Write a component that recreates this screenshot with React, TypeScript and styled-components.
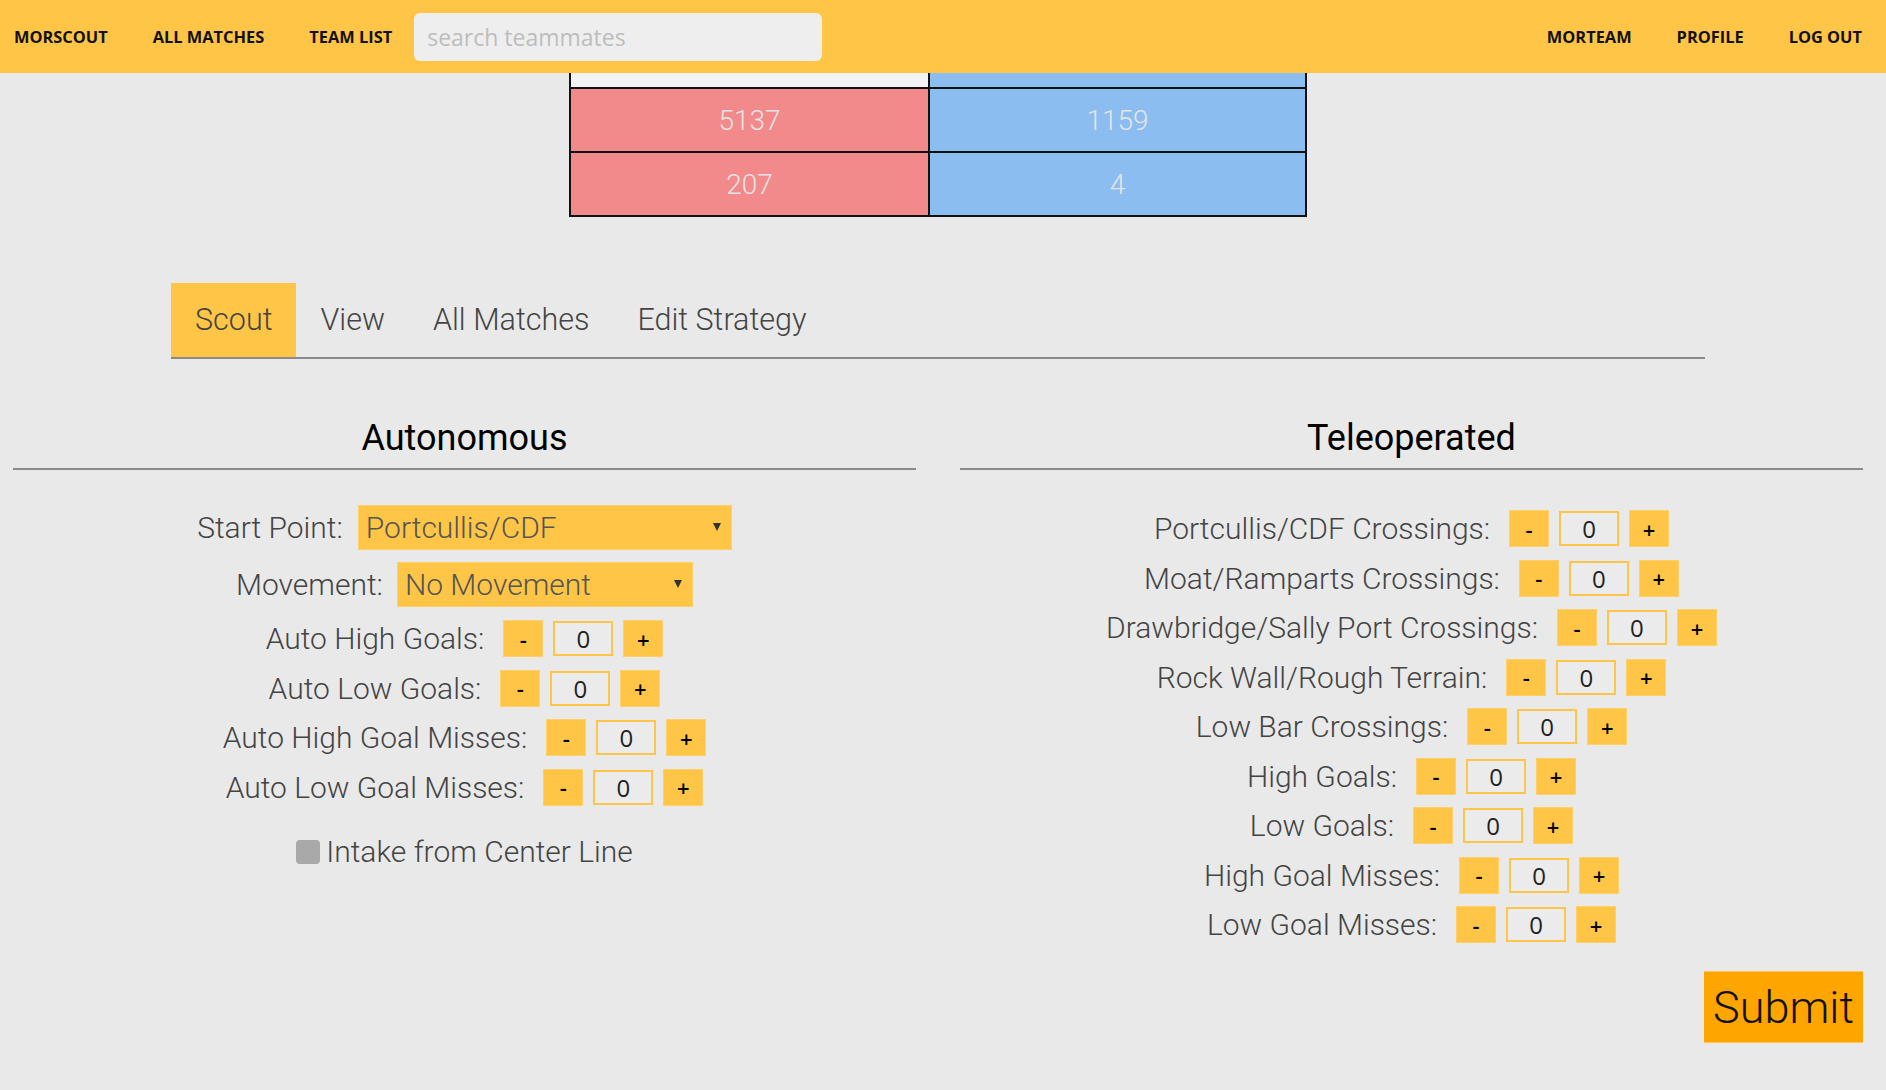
import React from 'react';
import styled, { createGlobalStyle } from 'styled-components';

const YELLOW = '#ffc547';

const GlobalStyle = createGlobalStyle`
  html, body {
    margin: 0;
    padding: 0;
    background: #e9e9e9;
  }
  body {
    font-family: Roboto, "Open Sans", sans-serif;
    font-weight: 300;
    color: #333;
  }
  * {
    box-sizing: border-box;
  }
`;

const leftNav = ['MorScout', 'All Matches', 'Team List'];
const rightNav = ['MorTeam', 'Profile', 'Log Out'];

const scores = [
  ['5137', '1159'],
  ['207', '4'],
];

const tabs = ['Scout', 'View', 'All Matches', 'Edit Strategy'];

const autoCounters = [
  'Auto High Goals:',
  'Auto Low Goals:',
  'Auto High Goal Misses:',
  'Auto Low Goal Misses:',
];

const teleCounters = [
  'Portcullis/CDF Crossings:',
  'Moat/Ramparts Crossings:',
  'Drawbridge/Sally Port Crossings:',
  'Rock Wall/Rough Terrain:',
  'Low Bar Crossings:',
  'High Goals:',
  'Low Goals:',
  'High Goal Misses:',
  'Low Goal Misses:',
];

const Counter = ({ label }: { label: string }) => (
  <StepRow>
    <FieldLabel>{label}</FieldLabel>
    <StepButton>-</StepButton>
    <CountInput defaultValue="0" />
    <StepButton>+</StepButton>
  </StepRow>
);

const App = () => {
  return (
    <>
      <GlobalStyle />
      <TopBar>
        <NavSide>
          <NavLinks>
            {leftNav.map((item) => (
              <NavLink key={item} href="#">
                {item}
              </NavLink>
            ))}
          </NavLinks>
          <SearchBox placeholder="search teammates" />
        </NavSide>
        <NavLinks>
          {rightNav.map((item) => (
            <NavLink key={item} href="#">
              {item}
            </NavLink>
          ))}
        </NavLinks>
      </TopBar>

      <Page>
        <ScoreTable>
          <colgroup>
            <col style={{ width: 359 }} />
            <col style={{ width: 377 }} />
          </colgroup>
          <tbody>
            <tr>
              <ScoreCell $side="head" $short />
              <ScoreCell $side="blue" $short />
            </tr>
            {scores.map(([red, blue]) => (
              <tr key={red}>
                <ScoreCell $side="red">{red}</ScoreCell>
                <ScoreCell $side="blue">{blue}</ScoreCell>
              </tr>
            ))}
          </tbody>
        </ScoreTable>

        <TabBar>
          {tabs.map((tab, i) => (
            <Tab key={tab} $active={i === 0}>
              {tab}
            </Tab>
          ))}
        </TabBar>

        <Columns>
          <section>
            <SectionTitle>Autonomous</SectionTitle>
            <Form $top={35}>
              <SelectList>
                <StepRow>
                  <FieldLabel $gap={15}>Start Point:</FieldLabel>
                  <SelectWrap $width={374}>
                    <Dropdown defaultValue="pc">
                      <option value="pc">Portcullis/CDF</option>
                    </Dropdown>
                    <Arrow />
                  </SelectWrap>
                </StepRow>
                <StepRow>
                  <FieldLabel $gap={14}>Movement:</FieldLabel>
                  <SelectWrap $width={296}>
                    <Dropdown defaultValue="none">
                      <option value="none">No Movement</option>
                    </Dropdown>
                    <Arrow />
                  </SelectWrap>
                </StepRow>
              </SelectList>
              <StepList $offset={13}>
                {autoCounters.map((label) => (
                  <Counter key={label} label={label} />
                ))}
              </StepList>
              <CheckRow>
                <CheckBox type="checkbox" />
                <CheckText>Intake from Center Line</CheckText>
              </CheckRow>
            </Form>
          </section>
          <section>
            <SectionTitle>Teleoperated</SectionTitle>
            <Form $top={40}>
              <StepList $offset={0}>
                {teleCounters.map((label) => (
                  <Counter key={label} label={label} />
                ))}
              </StepList>
            </Form>
          </section>
        </Columns>

        <SubmitRow>
          <SubmitButton>Submit</SubmitButton>
        </SubmitRow>
      </Page>
    </>
  );
};

export default App;

const TopBar = styled.header`
  position: fixed;
  top: 0;
  left: 0;
  right: 0;
  height: 73px;
  z-index: 10;
  background: ${YELLOW};
  display: flex;
  align-items: center;
  justify-content: space-between;
  padding: 0 24px 0 14px;
`;

const NavSide = styled.div`
  display: flex;
  align-items: center;
  gap: 22px;
`;

const NavLinks = styled.nav`
  display: flex;
  align-items: center;
  gap: 45px;
`;

const NavLink = styled.a`
  font-family: 'Open Sans', sans-serif;
  font-weight: 700;
  font-size: 16.4px;
  color: #111;
  text-decoration: none;
  text-transform: uppercase;
`;

const SearchBox = styled.input`
  width: 408px;
  height: 48px;
  border: none;
  border-radius: 6px;
  background: #eeeeee;
  padding: 0 13px;
  font-family: 'Open Sans', sans-serif;
  font-size: 23px;
  color: #333;
  outline: none;

  &::placeholder {
    color: #bdbdbd;
  }
`;

const Page = styled.main`
  padding: 73px 23px 40px 13px;
`;

const ScoreTable = styled.table`
  width: 736px;
  margin: 0 auto;
  border-collapse: collapse;
  table-layout: fixed;
`;

const cellColors = {
  head: '#f3f3f3',
  red: '#f28a8b',
  blue: '#8bbdf1',
};

const ScoreCell = styled.td<{ $side: 'head' | 'red' | 'blue'; $short?: boolean }>`
  height: ${(p) => (p.$short ? 15 : 64)}px;
  padding: 0;
  border: 2px solid #111;
  border-top: ${(p) => (p.$short ? 'none' : '2px solid #111')};
  background: ${(p) => cellColors[p.$side]};
  text-align: center;
  font-size: 28px;
  font-weight: 300;
  color: #e4e4e4;
`;

const TabBar = styled.div`
  width: 1534px;
  margin: 66px auto 0;
  display: flex;
  border-bottom: 2px solid #8a8a8a;
`;

const Tab = styled.div<{ $active?: boolean }>`
  height: 74px;
  line-height: 74px;
  padding: 0 24px;
  font-size: 30.5px;
  font-weight: 300;
  color: #444;
  background: ${(p) => (p.$active ? YELLOW : 'transparent')};
`;

const Columns = styled.div`
  display: grid;
  grid-template-columns: 1fr 1fr;
  column-gap: 44px;
  margin-top: 58px;
`;

const SectionTitle = styled.h2`
  margin: 0;
  font-size: 36px;
  font-weight: 400;
  line-height: 42px;
  color: #000;
  text-align: center;
  padding-bottom: 9px;
  border-bottom: 2px solid #8a8a8a;
`;

const Form = styled.div<{ $top: number }>`
  display: flex;
  flex-direction: column;
  align-items: center;
  padding-top: ${(p) => p.$top}px;
`;

const SelectList = styled.div`
  display: flex;
  flex-direction: column;
  align-items: center;
  gap: 12px;
`;

const StepList = styled.div<{ $offset: number }>`
  display: flex;
  flex-direction: column;
  align-items: center;
  gap: 12.5px;
  margin-top: ${(p) => p.$offset}px;
`;

const StepRow = styled.div`
  display: flex;
  align-items: center;
  justify-content: center;
`;

const FieldLabel = styled.label<{ $gap?: number }>`
  font-size: 30px;
  font-weight: 300;
  color: #444;
  white-space: nowrap;
  margin-right: ${(p) => p.$gap ?? 19}px;
`;

const StepButton = styled.button`
  width: 40px;
  height: 37px;
  padding: 0;
  border: 1px solid #ffcf6a;
  background: ${YELLOW};
  font-family: 'Open Sans', sans-serif;
  font-weight: 600;
  font-size: 22px;
  color: #000;
  cursor: pointer;
`;

const CountInput = styled.input`
  width: 60px;
  height: 35px;
  margin: 0 10px;
  border: 2px solid ${YELLOW};
  background: #ebebeb;
  text-align: center;
  font-family: 'Open Sans', sans-serif;
  font-size: 24px;
  color: #222;
  outline: none;
`;

const SelectWrap = styled.div<{ $width: number }>`
  position: relative;
  width: ${(p) => p.$width}px;
  height: 45px;
`;

const Dropdown = styled.select`
  appearance: none;
  width: 100%;
  height: 100%;
  border: 1px solid #ffcf6a;
  background: ${YELLOW};
  padding: 0 0 0 7px;
  font-family: Roboto, sans-serif;
  font-weight: 300;
  font-size: 30px;
  color: #555;
  outline: none;
`;

const Arrow = styled.span`
  position: absolute;
  right: 11px;
  top: 18px;
  width: 0;
  height: 0;
  border-left: 4.5px solid transparent;
  border-right: 4.5px solid transparent;
  border-top: 8px solid #333;
  pointer-events: none;
`;

const CheckRow = styled.div`
  display: flex;
  align-items: center;
  height: 36px;
  margin-top: 28px;
`;

const CheckBox = styled.input`
  appearance: none;
  width: 24px;
  height: 24px;
  margin: 0 6px 0 0;
  border-radius: 4px;
  background: #a9a9a9;
`;

const CheckText = styled.span`
  font-size: 30px;
  font-weight: 300;
  color: #444;
`;

const SubmitRow = styled.div`
  display: flex;
  justify-content: flex-end;
  margin-top: 28px;
`;

const SubmitButton = styled.button`
  width: 159px;
  height: 72px;
  padding: 0;
  border: none;
  border-top: 1px solid #ffc45a;
  border-bottom: 1px solid #ffc45a;
  background: #ffa500;
  font-family: Roboto, sans-serif;
  font-weight: 300;
  font-size: 45px;
  color: #111;
  cursor: pointer;
`;
